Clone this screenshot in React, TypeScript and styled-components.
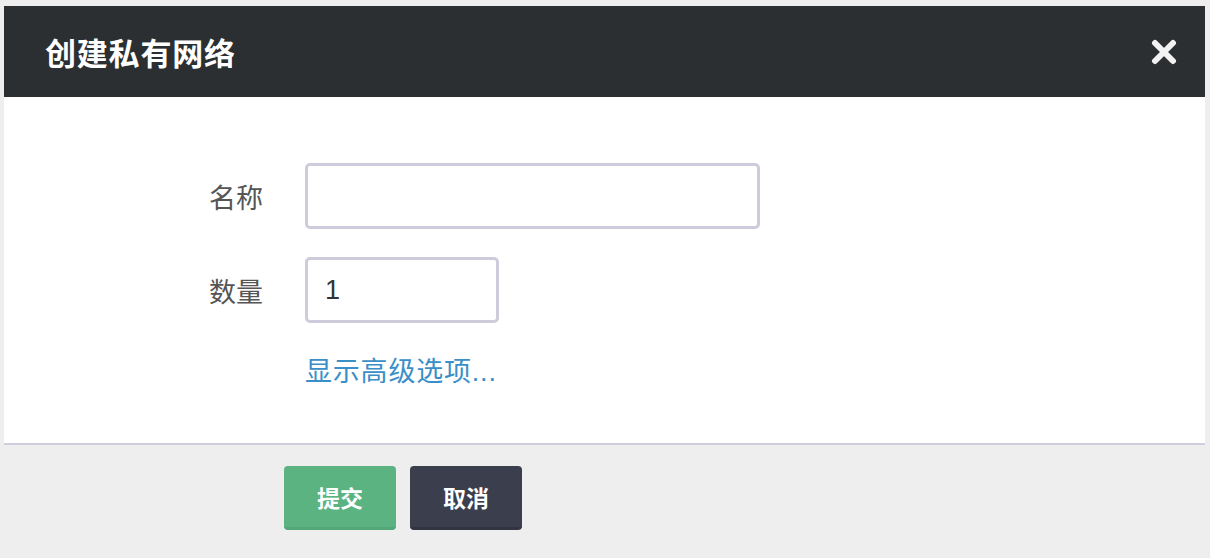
import styled, { createGlobalStyle } from "styled-components";

const GlobalStyle = createGlobalStyle`
  html, body {
    margin: 0;
    padding: 0;
    background: #eeeeee;
  }
  body {
    font-family: "Liberation Sans", "Noto Sans CJK SC", sans-serif;
  }
`;

const Modal = styled.div`
  margin: 6px 5px 0 4px;
  display: flex;
  flex-direction: column;
`;

const Header = styled.div`
  height: 91px;
  background: #2b2f31;
  display: flex;
  align-items: center;
  justify-content: space-between;
  padding: 0 28px 0 41px;
`;

const Title = styled.h2`
  margin: 0;
  font-size: 31px;
  font-weight: 700;
  color: #ffffff;
  letter-spacing: 0.8px;
`;

const CloseButton = styled.button`
  border: none;
  background: none;
  padding: 0;
  width: 26px;
  height: 26px;
  display: flex;
  cursor: pointer;
`;

const Body = styled.div`
  height: 348px;
  box-sizing: border-box;
  background: #ffffff;
  border-bottom: 2px solid #d0cddd;
  padding-top: 66px;
  display: grid;
  grid-template-columns: 259px 1fr;
  column-gap: 42px;
  row-gap: 28px;
  align-content: start;
`;

const Label = styled.label`
  font-size: 27px;
  color: #555555;
  text-align: right;
  align-self: center;
`;

const Input = styled.input<{ w: number }>`
  width: ${(p) => p.w}px;
  height: 66px;
  box-sizing: border-box;
  border: 3px solid #cfcbdc;
  border-radius: 5px;
  padding: 0 17px;
  font-size: 27px;
  font-family: "Liberation Sans", sans-serif;
  color: #333333;
  outline: none;
`;

const AdvancedLink = styled.a`
  grid-column: 2;
  margin-top: 8px;
  font-size: 27px;
  line-height: 27px;
  letter-spacing: 0.8px;
  color: #3a8fc8;
  text-decoration: none;
  cursor: pointer;
`;

const Footer = styled.div`
  background: #eeeeee;
  padding: 21px 0 28px 280px;
  display: flex;
  gap: 14px;
`;

const Button = styled.button<{ kind: "primary" | "dark" }>`
  width: 112px;
  height: 64px;
  border: none;
  border-radius: 4px;
  border-bottom: 3px solid ${(p) => (p.kind === "primary" ? "#52a677" : "#323441")};
  background: ${(p) => (p.kind === "primary" ? "#5bb381" : "#3b3e4c")};
  color: #ffffff;
  font-size: 23px;
  font-weight: 700;
  font-family: "Noto Sans CJK SC", sans-serif;
  cursor: pointer;
`;

function CloseIcon() {
  return (
    <svg width="26" height="26" viewBox="0 0 26 26">
      <path
        d="M4 4 L22 22 M22 4 L4 22"
        stroke="#f2f2f2"
        strokeWidth="6"
        strokeLinecap="round"
      />
    </svg>
  );
}

function App() {
  return (
    <>
      <GlobalStyle />
      <Modal>
        <Header>
          <Title>创建私有网络</Title>
          <CloseButton aria-label="close">
            <CloseIcon />
          </CloseButton>
        </Header>
        <Body>
          <Label>名称</Label>
          <Input w={455} />
          <Label>数量</Label>
          <Input w={194} defaultValue="1" />
          <AdvancedLink>显示高级选项...</AdvancedLink>
        </Body>
        <Footer>
          <Button kind="primary">提交</Button>
          <Button kind="dark">取消</Button>
        </Footer>
      </Modal>
    </>
  );
}

export default App;
